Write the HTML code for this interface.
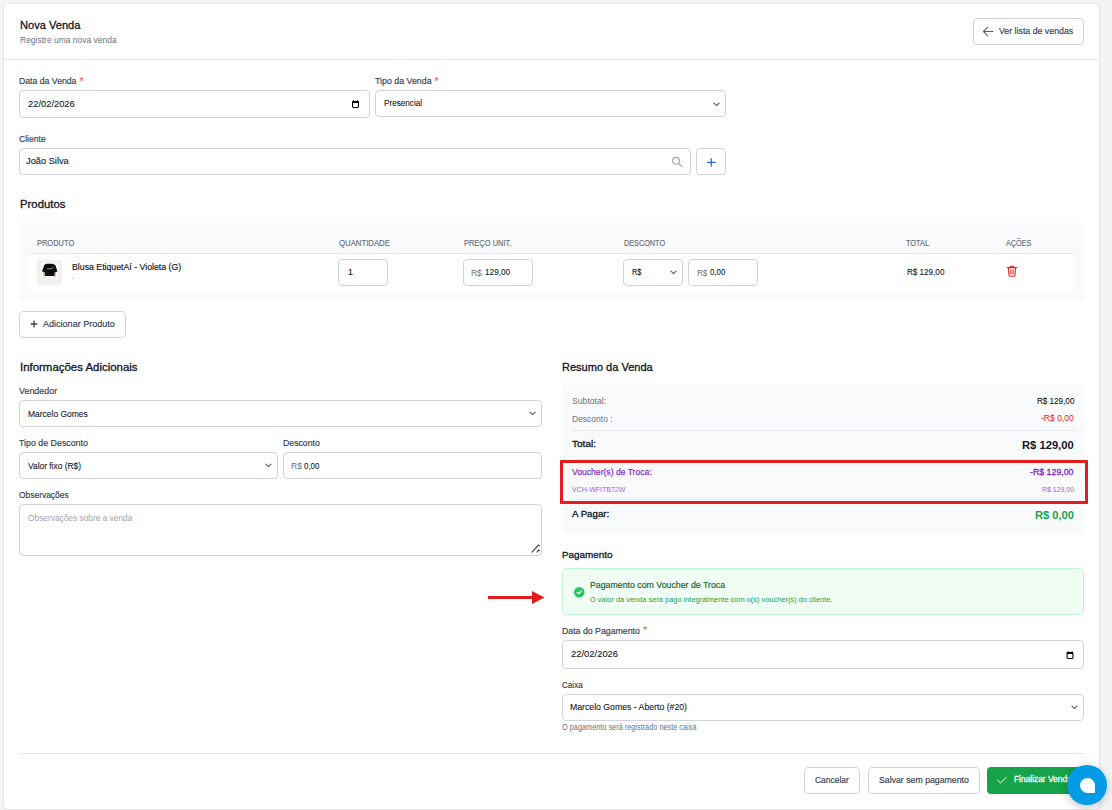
<!DOCTYPE html>
<html><head><meta charset="utf-8"><title>Nova Venda</title>
<style>
html,body{margin:0;padding:0;}
body{width:1112px;height:810px;overflow:hidden;background:#f3f4f6;position:relative;
font-family:"Liberation Sans",sans-serif;}
.a{position:absolute;box-sizing:border-box;}
.t{white-space:nowrap;}
</style></head><body>
<div class="a" style="left:3px;top:3px;width:1097px;height:807px;background:#ffffff;border:1px solid #e5e7eb;box-sizing:border-box;border-radius:5px;box-shadow:0 1px 2px rgba(0,0,0,0.05);"></div>
<div class="a" style="left:4px;top:59px;width:1095px;height:1px;background:#e5e7eb;"></div>
<div class="a t" style="left:19.70px;top:15.12px;font-size:11.5px;line-height:20px;color:#111827;-webkit-text-stroke:0.3px #111827;transform:scaleX(0.9641);transform-origin:left top;">Nova Venda</div>
<div class="a t" style="left:19.50px;top:29.68px;font-size:9.3px;line-height:20px;color:#6b7280;transform:scaleX(0.9132);transform-origin:left top;">Registre uma nova venda</div>
<div class="a" style="left:973px;top:18px;width:111px;height:27px;background:#fff;border:1px solid #d1d5db;box-sizing:border-box;border-radius:4px;"></div>
<svg class="a" style="left:982px;top:25px" width="12" height="12" viewBox="0 0 12 12"><path d="M10.9 6.5H1.5M5.6 2.4L1.5 6.5L5.6 10.6" fill="none" stroke="#566070" stroke-width="1.1" stroke-linecap="round" stroke-linejoin="round"/></svg>
<div class="a t" style="left:999.00px;top:20.50px;font-size:9.8px;line-height:20px;color:#374151;-webkit-text-stroke:0.18px #374151;transform:scaleX(0.8961);transform-origin:left top;">Ver lista de vendas</div>
<div class="a t" style="left:19.40px;top:70.64px;font-size:9.4px;line-height:20px;color:#374151;-webkit-text-stroke:0.18px #374151;transform:scaleX(0.9260);transform-origin:left top;">Data da Venda</div>
<div class="a t" style="left:79.40px;top:72.00px;font-size:10.4px;line-height:20px;color:#ef4444;">*</div>
<div class="a" style="left:19px;top:90px;width:351px;height:28px;background:#fff;border:1px solid #d1d5db;box-sizing:border-box;border-radius:4px;"></div>
<div class="a t" style="left:28.40px;top:93.57px;font-size:9.6px;line-height:20px;color:#111827;-webkit-text-stroke:0.1px #111827;transform:scaleX(0.9740);transform-origin:left top;">22/02/2026</div>
<svg class="a" style="left:352px;top:100px" width="7" height="8" viewBox="0 0 7 8"><rect x="0.55" y="1.55" width="5.9" height="5.9" rx="0.9" fill="none" stroke="#000" stroke-width="1.1"/><rect x="0.5" y="1.3" width="6" height="1.7" fill="#000"/><rect x="1.1" y="0.1" width="0.85" height="1.5" fill="#000"/><rect x="5.05" y="0.1" width="0.85" height="1.5" fill="#000"/></svg>
<div class="a t" style="left:375.20px;top:71.24px;font-size:9.4px;line-height:20px;color:#374151;-webkit-text-stroke:0.18px #374151;transform:scaleX(0.9403);transform-origin:left top;">Tipo da Venda</div>
<div class="a t" style="left:434.60px;top:72.30px;font-size:10.4px;line-height:20px;color:#ef4444;">*</div>
<div class="a" style="left:375px;top:90px;width:351px;height:27px;background:#fff;border:1px solid #d1d5db;box-sizing:border-box;border-radius:4px;"></div>
<div class="a t" style="left:383.80px;top:93.27px;font-size:9.6px;line-height:20px;color:#111827;-webkit-text-stroke:0.1px #111827;transform:scaleX(0.8504);transform-origin:left top;">Presencial</div>
<svg class="a" style="left:712.5px;top:101.5px" width="7" height="5" viewBox="0 0 7 5"><path d="M0.9 1.1L3.5 3.6L6.1 1.1" fill="none" stroke="#4b5563" stroke-width="1.05" stroke-linecap="round" stroke-linejoin="round"/></svg>
<div class="a t" style="left:19.40px;top:128.64px;font-size:9.4px;line-height:20px;color:#374151;-webkit-text-stroke:0.18px #374151;transform:scaleX(0.9128);transform-origin:left top;">Cliente</div>
<div class="a" style="left:19px;top:148px;width:672px;height:27px;background:#fff;border:1px solid #d1d5db;box-sizing:border-box;border-radius:4px;"></div>
<div class="a t" style="left:26.40px;top:151.37px;font-size:9.6px;line-height:20px;color:#111827;-webkit-text-stroke:0.1px #111827;transform:scaleX(0.9661);transform-origin:left top;">João Silva</div>
<svg class="a" style="left:671px;top:156px" width="13" height="13" viewBox="0 0 13 13"><circle cx="5" cy="4.8" r="3.4" fill="none" stroke="#9ca3af" stroke-width="1.15"/><path d="M7.5 7.3L10.8 10.6" stroke="#9ca3af" stroke-width="1.15" stroke-linecap="round"/></svg>
<div class="a" style="left:696px;top:148px;width:30px;height:27px;background:#fff;border:1px solid #d1d5db;box-sizing:border-box;border-radius:4px;"></div>
<svg class="a" style="left:706px;top:157px" width="11" height="11" viewBox="0 0 11 11"><path d="M5.25 1.6V9.2M1.45 5.4H9.05" stroke="#2563eb" stroke-width="1.25" stroke-linecap="round"/></svg>
<div class="a t" style="left:19.60px;top:194.16px;font-size:10.5px;line-height:20px;color:#111827;-webkit-text-stroke:0.3px #111827;transform:scaleX(1.0797);transform-origin:left top;">Produtos</div>
<div class="a" style="left:19px;top:223px;width:1065px;height:78px;background:#f9fafb;border-radius:4px;"></div>
<div class="a" style="left:29px;top:253px;width:1045px;height:1px;background:#e5e7eb;"></div>
<div class="a" style="left:29px;top:254px;width:1045px;height:37px;background:#ffffff;"></div>
<div class="a t" style="left:36.70px;top:233.02px;font-size:8.3px;line-height:20px;color:#6b7280;-webkit-text-stroke:0.18px #6b7280;transform:scaleX(0.8996);transform-origin:left top;">PRODUTO</div>
<div class="a t" style="left:338.50px;top:233.32px;font-size:8.3px;line-height:20px;color:#6b7280;-webkit-text-stroke:0.18px #6b7280;transform:scaleX(0.9357);transform-origin:left top;">QUANTIDADE</div>
<div class="a t" style="left:463.50px;top:233.32px;font-size:8.3px;line-height:20px;color:#6b7280;-webkit-text-stroke:0.18px #6b7280;transform:scaleX(0.9001);transform-origin:left top;">PREÇO UNIT.</div>
<div class="a t" style="left:623.80px;top:233.32px;font-size:8.3px;line-height:20px;color:#6b7280;-webkit-text-stroke:0.18px #6b7280;transform:scaleX(0.8763);transform-origin:left top;">DESCONTO</div>
<div class="a t" style="left:906.20px;top:233.32px;font-size:8.3px;line-height:20px;color:#6b7280;-webkit-text-stroke:0.18px #6b7280;transform:scaleX(0.8885);transform-origin:left top;">TOTAL</div>
<div class="a t" style="left:1005.80px;top:233.32px;font-size:8.3px;line-height:20px;color:#6b7280;-webkit-text-stroke:0.18px #6b7280;transform:scaleX(0.8675);transform-origin:left top;">AÇÕES</div>
<div class="a" style="left:37px;top:260px;width:25px;height:25px;background:#f0f0f0;border-radius:3px;"></div>
<svg class="a" style="left:41px;top:262px" width="17" height="17" viewBox="0 0 17 17"><rect x="0.7" y="0.7" width="16.1" height="15.3" fill="#fbfbfb"/><rect x="2.3" y="9.8" width="2" height="4.9" fill="#d9a597"/><rect x="12.9" y="9.8" width="2" height="4.9" fill="#d9a597"/><path d="M5.2 1.8L11.4 1.8L14.3 3L16.5 9.6L13.6 10.3L13.3 14L4.2 14L3.9 10.3L1 9.6L3.3 3Z" fill="#0d0d0d"/><path d="M6.2 6.6Q9 7.3 11.3 6.4M11.3 6.4L12.6 5.2" stroke="#cfcfcf" stroke-width="0.7" fill="none"/></svg>
<div class="a t" style="left:72.00px;top:256.74px;font-size:9.4px;line-height:20px;color:#111827;-webkit-text-stroke:0.18px #111827;transform:scaleX(0.9327);transform-origin:left top;">Blusa EtiquetAí - Violeta (G)</div>
<div class="a t" style="left:72.00px;top:267.73px;font-size:8px;line-height:20px;color:#9ca3af;">-</div>
<div class="a" style="left:338px;top:259px;width:50px;height:27px;background:#fff;border:1px solid #d1d5db;box-sizing:border-box;border-radius:4px;"></div>
<div class="a t" style="left:347.80px;top:262.04px;font-size:9.4px;line-height:20px;color:#111827;-webkit-text-stroke:0.1px #111827;">1</div>
<div class="a" style="left:463px;top:259px;width:70px;height:27px;background:#fff;border:1px solid #d1d5db;box-sizing:border-box;border-radius:4px;"></div>
<div class="a t" style="left:471.20px;top:262.54px;font-size:9.4px;line-height:20px;color:#6b7280;transform:scaleX(0.9000);transform-origin:left top;">R$</div>
<div class="a t" style="left:484.70px;top:262.04px;font-size:9.4px;line-height:20px;color:#111827;-webkit-text-stroke:0.1px #111827;transform:scaleX(0.8765);transform-origin:left top;">129,00</div>
<div class="a" style="left:623px;top:259px;width:60px;height:27px;background:#fff;border:1px solid #d1d5db;box-sizing:border-box;border-radius:4px;"></div>
<div class="a t" style="left:632.40px;top:262.04px;font-size:9.4px;line-height:20px;color:#111827;-webkit-text-stroke:0.1px #111827;transform:scaleX(0.7917);transform-origin:left top;">R$</div>
<svg class="a" style="left:669.5px;top:269.5px" width="7" height="5" viewBox="0 0 7 5"><path d="M0.9 1.1L3.5 3.6L6.1 1.1" fill="none" stroke="#4b5563" stroke-width="1.05" stroke-linecap="round" stroke-linejoin="round"/></svg>
<div class="a" style="left:688px;top:259px;width:70px;height:27px;background:#fff;border:1px solid #d1d5db;box-sizing:border-box;border-radius:4px;"></div>
<div class="a t" style="left:696.70px;top:262.54px;font-size:9.4px;line-height:20px;color:#6b7280;transform:scaleX(0.8667);transform-origin:left top;">R$</div>
<div class="a t" style="left:710.10px;top:262.04px;font-size:9.4px;line-height:20px;color:#111827;-webkit-text-stroke:0.1px #111827;transform:scaleX(0.8361);transform-origin:left top;">0,00</div>
<div class="a t" style="left:906.50px;top:262.04px;font-size:9.4px;line-height:20px;color:#111827;-webkit-text-stroke:0.1px #111827;transform:scaleX(0.8641);transform-origin:left top;">R$ 129,00</div>
<svg class="a" style="left:1006px;top:264.6px" width="12" height="12" viewBox="0 0 12 12"><path d="M1.3 2.6H10.7M4.3 2.6V1.3H7.7V2.6M2.4 2.6L3 10.4Q3.1 11.2 3.9 11.2H8.1Q8.9 11.2 9 10.4L9.6 2.6M4.9 4.8V8.9M7.1 4.8V8.9" fill="none" stroke="#dc2626" stroke-width="1.1" stroke-linecap="round" stroke-linejoin="round"/></svg>
<div class="a" style="left:19px;top:311px;width:107px;height:27px;background:#fff;border:1px solid #d1d5db;box-sizing:border-box;border-radius:4px;"></div>
<svg class="a" style="left:30px;top:320px" width="8" height="8" viewBox="0 0 8 8"><path d="M4 1.1V6.9M1.1 4H6.9" stroke="#374151" stroke-width="1.35" stroke-linecap="round"/></svg>
<div class="a t" style="left:43.10px;top:313.77px;font-size:9.6px;line-height:20px;color:#374151;-webkit-text-stroke:0.18px #374151;transform:scaleX(0.9423);transform-origin:left top;">Adicionar Produto</div>
<div class="a t" style="left:19.60px;top:357.03px;font-size:10.6px;line-height:20px;color:#111827;-webkit-text-stroke:0.3px #111827;transform:scaleX(1.0789);transform-origin:left top;">Informações Adicionais</div>
<div class="a t" style="left:19.30px;top:380.54px;font-size:9.4px;line-height:20px;color:#374151;-webkit-text-stroke:0.18px #374151;transform:scaleX(0.9491);transform-origin:left top;">Vendedor</div>
<div class="a" style="left:19px;top:400px;width:523px;height:27px;background:#fff;border:1px solid #d1d5db;box-sizing:border-box;border-radius:4px;"></div>
<div class="a t" style="left:27.90px;top:403.54px;font-size:9.4px;line-height:20px;color:#111827;-webkit-text-stroke:0.1px #111827;transform:scaleX(0.9028);transform-origin:left top;">Marcelo Gomes</div>
<svg class="a" style="left:528.5px;top:411.0px" width="7" height="5" viewBox="0 0 7 5"><path d="M0.9 1.1L3.5 3.6L6.1 1.1" fill="none" stroke="#4b5563" stroke-width="1.05" stroke-linecap="round" stroke-linejoin="round"/></svg>
<div class="a t" style="left:19.30px;top:432.74px;font-size:9.4px;line-height:20px;color:#374151;-webkit-text-stroke:0.18px #374151;transform:scaleX(0.9421);transform-origin:left top;">Tipo de Desconto</div>
<div class="a" style="left:19px;top:452px;width:259px;height:27px;background:#fff;border:1px solid #d1d5db;box-sizing:border-box;border-radius:4px;"></div>
<div class="a t" style="left:27.90px;top:455.54px;font-size:9.4px;line-height:20px;color:#111827;-webkit-text-stroke:0.1px #111827;transform:scaleX(0.8939);transform-origin:left top;">Valor fixo (R$)</div>
<svg class="a" style="left:264.5px;top:463.0px" width="7" height="5" viewBox="0 0 7 5"><path d="M0.9 1.1L3.5 3.6L6.1 1.1" fill="none" stroke="#4b5563" stroke-width="1.05" stroke-linecap="round" stroke-linejoin="round"/></svg>
<div class="a t" style="left:283.30px;top:432.74px;font-size:9.4px;line-height:20px;color:#374151;-webkit-text-stroke:0.18px #374151;transform:scaleX(0.9295);transform-origin:left top;">Desconto</div>
<div class="a" style="left:283px;top:452px;width:259px;height:27px;background:#fff;border:1px solid #d1d5db;box-sizing:border-box;border-radius:4px;"></div>
<div class="a t" style="left:290.70px;top:455.74px;font-size:9.4px;line-height:20px;color:#6b7280;transform:scaleX(0.9167);transform-origin:left top;">R$</div>
<div class="a t" style="left:304.30px;top:455.54px;font-size:9.4px;line-height:20px;color:#111827;-webkit-text-stroke:0.1px #111827;transform:scaleX(0.8470);transform-origin:left top;">0,00</div>
<div class="a t" style="left:19.40px;top:484.64px;font-size:9.4px;line-height:20px;color:#374151;-webkit-text-stroke:0.18px #374151;transform:scaleX(0.8989);transform-origin:left top;">Observações</div>
<div class="a" style="left:19px;top:504px;width:523px;height:52px;background:#fff;border:1px solid #d1d5db;box-sizing:border-box;border-radius:4px;"></div>
<div class="a t" style="left:28.00px;top:507.64px;font-size:9.4px;line-height:20px;color:#9ca3af;transform:scaleX(0.8903);transform-origin:left top;">Observações sobre a venda</div>
<svg class="a" style="left:531px;top:544px" width="10" height="10" viewBox="0 0 10 10"><path d="M1 8.1L7.5 1M6.2 8.1L7.5 5.9M7.5 1.1L8.4 1.7M7.5 6L8.4 6.6" stroke="#4b4b4b" stroke-width="1.2" stroke-linecap="round" fill="none"/></svg>
<div class="a t" style="left:561.80px;top:357.13px;font-size:10.6px;line-height:20px;color:#111827;-webkit-text-stroke:0.3px #111827;transform:scaleX(1.0401);transform-origin:left top;">Resumo da Venda</div>
<div class="a" style="left:562px;top:385px;width:522px;height:149px;background:#f9fafb;border-radius:4px;"></div>
<div class="a t" style="left:571.70px;top:390.74px;font-size:9.4px;line-height:20px;color:#6b7280;transform:scaleX(0.9218);transform-origin:left top;">Subtotal:</div>
<div class="a t" style="left:1036.70px;top:390.54px;font-size:9.4px;line-height:20px;color:#111827;-webkit-text-stroke:0.1px #111827;transform:scaleX(0.8641);transform-origin:left top;">R$ 129,00</div>
<div class="a t" style="left:571.70px;top:408.64px;font-size:9.4px;line-height:20px;color:#6b7280;transform:scaleX(0.9055);transform-origin:left top;">Desconto :</div>
<div class="a t" style="left:1041.30px;top:408.44px;font-size:9.4px;line-height:20px;color:#dc2626;transform:scaleX(0.9126);transform-origin:left top;">-R$ 0,00</div>
<div class="a" style="left:572px;top:430px;width:502px;height:1px;background:#e5e7eb;"></div>
<div class="a t" style="left:571.70px;top:433.67px;font-size:9.6px;line-height:20px;color:#111827;-webkit-text-stroke:0.3px #111827;transform:scaleX(1.0458);transform-origin:left top;">Total:</div>
<div class="a t" style="left:1022.30px;top:434.85px;font-size:11.4px;line-height:20px;color:#111827;font-weight:bold;transform:scaleX(0.9829);transform-origin:left top;">R$ 129,00</div>
<div class="a" style="left:572px;top:459px;width:502px;height:1px;background:#f3e8ff;"></div>
<div class="a" style="left:572px;top:499px;width:502px;height:1px;background:#f3e8ff;"></div>
<div class="a t" style="left:571.70px;top:462.44px;font-size:9.4px;line-height:20px;color:#7e22ce;-webkit-text-stroke:0.18px #7e22ce;transform:scaleX(0.9158);transform-origin:left top;">Voucher(s) de Troca:</div>
<div class="a t" style="left:1030.40px;top:462.44px;font-size:9.4px;line-height:20px;color:#7e22ce;-webkit-text-stroke:0.3px #7e22ce;transform:scaleX(0.9376);transform-origin:left top;">-R$ 129,00</div>
<div class="a t" style="left:571.70px;top:480.23px;font-size:8px;line-height:20px;color:#a855f7;transform:scaleX(0.8768);transform-origin:left top;">VCH-WFITB72W</div>
<div class="a t" style="left:1042.00px;top:480.03px;font-size:8px;line-height:20px;color:#a855f7;transform:scaleX(0.8672);transform-origin:left top;">R$ 129,00</div>
<div class="a t" style="left:571.70px;top:503.67px;font-size:9.6px;line-height:20px;color:#111827;-webkit-text-stroke:0.3px #111827;transform:scaleX(1.0122);transform-origin:left top;">A Pagar:</div>
<div class="a t" style="left:1035.00px;top:504.62px;font-size:11.2px;line-height:20px;color:#16a34a;font-weight:bold;transform:scaleX(0.9936);transform-origin:left top;">R$ 0,00</div>
<div class="a" style="left:560px;top:460px;width:528px;height:43.7px;border:3px solid #e11d1d;"></div>
<div class="a t" style="left:562.00px;top:545.47px;font-size:9.9px;line-height:20px;color:#111827;-webkit-text-stroke:0.3px #111827;transform:scaleX(1.0010);transform-origin:left top;">Pagamento</div>
<div class="a" style="left:562px;top:568px;width:522px;height:47px;background:#f0fdf4;border:1px solid #bbf7d0;box-sizing:border-box;border-radius:5px;"></div>
<svg class="a" style="left:574px;top:587px" width="10.5" height="10.5" viewBox="0 0 10 10"><circle cx="5" cy="5" r="5" fill="#22c55e"/><path d="M2.9 5.1L4.3 6.4L7.1 3.7" fill="none" stroke="#fff" stroke-width="1.3" stroke-linecap="round" stroke-linejoin="round"/></svg>
<div class="a t" style="left:590.00px;top:574.61px;font-size:9.2px;line-height:20px;color:#166534;-webkit-text-stroke:0.18px #166534;transform:scaleX(0.9548);transform-origin:left top;">Pagamento com Voucher de Troca</div>
<div class="a t" style="left:590.00px;top:589.67px;font-size:7.6px;line-height:20px;color:#16a34a;transform:scaleX(0.9767);transform-origin:left top;">O valor da venda será pago integralmente com o(s) voucher(s) do cliente.</div>
<div class="a t" style="left:561.90px;top:620.54px;font-size:9.4px;line-height:20px;color:#374151;-webkit-text-stroke:0.18px #374151;transform:scaleX(0.9330);transform-origin:left top;">Data do Pagamento</div>
<div class="a t" style="left:643.10px;top:621.20px;font-size:10.4px;line-height:20px;color:#ef4444;">*</div>
<div class="a" style="left:562px;top:640px;width:522px;height:29px;background:#fff;border:1px solid #d1d5db;box-sizing:border-box;border-radius:4px;"></div>
<div class="a t" style="left:570.90px;top:644.37px;font-size:9.6px;line-height:20px;color:#111827;-webkit-text-stroke:0.1px #111827;transform:scaleX(0.9802);transform-origin:left top;">22/02/2026</div>
<svg class="a" style="left:1066px;top:650.5px" width="8" height="8" viewBox="0 0 7 8"><rect x="0.55" y="1.55" width="5.9" height="5.9" rx="0.9" fill="none" stroke="#000" stroke-width="1.1"/><rect x="0.5" y="1.3" width="6" height="1.7" fill="#000"/><rect x="1.1" y="0.1" width="0.85" height="1.5" fill="#000"/><rect x="5.05" y="0.1" width="0.85" height="1.5" fill="#000"/></svg>
<div class="a t" style="left:562.00px;top:674.54px;font-size:9.4px;line-height:20px;color:#374151;-webkit-text-stroke:0.18px #374151;transform:scaleX(0.8649);transform-origin:left top;">Caixa</div>
<div class="a" style="left:562px;top:694px;width:522px;height:27px;background:#fff;border:1px solid #d1d5db;box-sizing:border-box;border-radius:4px;"></div>
<div class="a t" style="left:570.40px;top:696.64px;font-size:9.4px;line-height:20px;color:#111827;-webkit-text-stroke:0.1px #111827;transform:scaleX(0.9276);transform-origin:left top;">Marcelo Gomes - Aberto (#20)</div>
<svg class="a" style="left:1070.5px;top:704.5px" width="7" height="5" viewBox="0 0 7 5"><path d="M0.9 1.1L3.5 3.6L6.1 1.1" fill="none" stroke="#4b5563" stroke-width="1.05" stroke-linecap="round" stroke-linejoin="round"/></svg>
<div class="a t" style="left:562.00px;top:718.16px;font-size:8.2px;line-height:20px;color:#6b7280;transform:scaleX(0.8953);transform-origin:left top;">O pagamento será registrado neste caixa</div>
<div class="a" style="left:488px;top:596px;width:45px;height:3px;background:#e11d1d;"></div>
<svg class="a" style="left:532px;top:590.5px" width="13" height="13" viewBox="0 0 13 13"><path d="M0 0L12.5 6.5L0 13Z" fill="#e11d1d"/></svg>
<div class="a" style="left:19px;top:753px;width:1065px;height:1px;background:#e5e7eb;"></div>
<div class="a" style="left:804px;top:767px;width:56px;height:27px;background:#fff;border:1px solid #d1d5db;box-sizing:border-box;border-radius:4px;"></div>
<div class="a t" style="left:815.20px;top:769.87px;font-size:9.6px;line-height:20px;color:#374151;-webkit-text-stroke:0.18px #374151;transform:scaleX(0.8802);transform-origin:left top;">Cancelar</div>
<div class="a" style="left:868px;top:767px;width:112px;height:27px;background:#fff;border:1px solid #d1d5db;box-sizing:border-box;border-radius:4px;"></div>
<div class="a t" style="left:878.70px;top:769.87px;font-size:9.6px;line-height:20px;color:#374151;-webkit-text-stroke:0.18px #374151;transform:scaleX(0.9108);transform-origin:left top;">Salvar sem pagamento</div>
<div class="a" style="left:987px;top:767px;width:97px;height:27px;background:#16a34a;border-radius:4px;"></div>
<svg class="a" style="left:996px;top:775px" width="12" height="10" viewBox="0 0 12 10"><path d="M1.9 5.4L4.5 7.9L10.2 2.4" fill="none" stroke="#fff" stroke-width="1.0" stroke-linecap="round" stroke-linejoin="round"/></svg>
<div class="a t" style="left:1013.80px;top:769.44px;font-size:9.4px;line-height:20px;color:#ffffff;-webkit-text-stroke:0.3px #ffffff;transform:scaleX(0.8935);transform-origin:left top;">Finalizar Venda</div>
<div class="a" style="left:1067px;top:765px;width:40px;height:40px;border-radius:50%;background:#039be5;box-shadow:0 2px 8px rgba(0,0,0,0.25);"></div>
<div class="a" style="left:1080px;top:778px;width:15px;height:15px;border-radius:50% 50% 0 50%;background:#fff;"></div>
</body></html>
